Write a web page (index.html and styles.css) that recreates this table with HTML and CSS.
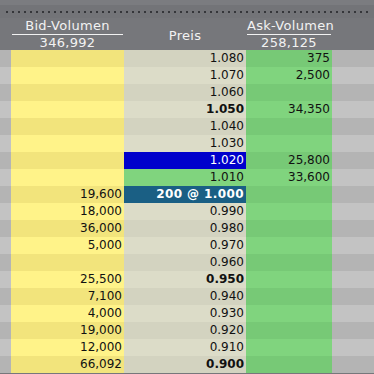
FILE: index.html
```html
<!DOCTYPE html>
<html lang="de">
<head>
  <meta charset="UTF-8">
  <title>Orderbuch</title>
  <link rel="stylesheet" href="styles.css">
</head>
<body>
  <div class="book">
    <div class="grip"><span class="dots"></span></div>
    <div class="head">
      <div class="side"></div>
      <div class="bid total"><span class="lbl">Bid-Volumen</span><span>346,992</span></div>
      <div class="price"><span>Preis</span></div>
      <div class="ask total"><span class="lbl">Ask-Volumen</span><span>258,125</span></div>
      <div class="side"></div>
    </div>
    <table class="rows">
      <tr><td class="side"></td><td class="bid"></td><td class="price">1.080</td><td class="ask">375</td><td class="side"></td></tr>
      <tr><td class="side"></td><td class="bid"></td><td class="price">1.070</td><td class="ask">2,500</td><td class="side"></td></tr>
      <tr><td class="side"></td><td class="bid"></td><td class="price">1.060</td><td class="ask"></td><td class="side"></td></tr>
      <tr><td class="side"></td><td class="bid"></td><td class="price strong">1.050</td><td class="ask">34,350</td><td class="side"></td></tr>
      <tr><td class="side"></td><td class="bid"></td><td class="price">1.040</td><td class="ask"></td><td class="side"></td></tr>
      <tr><td class="side"></td><td class="bid"></td><td class="price">1.030</td><td class="ask"></td><td class="side"></td></tr>
      <tr><td class="side"></td><td class="bid"></td><td class="price best-ask">1.020</td><td class="ask">25,800</td><td class="side"></td></tr>
      <tr><td class="side"></td><td class="bid"></td><td class="price in-ask">1.010</td><td class="ask">33,600</td><td class="side"></td></tr>
      <tr><td class="side"></td><td class="bid">19,600</td><td class="price last">200 @ 1.000</td><td class="ask"></td><td class="side"></td></tr>
      <tr><td class="side"></td><td class="bid">18,000</td><td class="price">0.990</td><td class="ask"></td><td class="side"></td></tr>
      <tr><td class="side"></td><td class="bid">36,000</td><td class="price">0.980</td><td class="ask"></td><td class="side"></td></tr>
      <tr><td class="side"></td><td class="bid">5,000</td><td class="price">0.970</td><td class="ask"></td><td class="side"></td></tr>
      <tr><td class="side"></td><td class="bid"></td><td class="price">0.960</td><td class="ask"></td><td class="side"></td></tr>
      <tr><td class="side"></td><td class="bid">25,500</td><td class="price strong">0.950</td><td class="ask"></td><td class="side"></td></tr>
      <tr><td class="side"></td><td class="bid">7,100</td><td class="price">0.940</td><td class="ask"></td><td class="side"></td></tr>
      <tr><td class="side"></td><td class="bid">4,000</td><td class="price">0.930</td><td class="ask"></td><td class="side"></td></tr>
      <tr><td class="side"></td><td class="bid">19,000</td><td class="price">0.920</td><td class="ask"></td><td class="side"></td></tr>
      <tr><td class="side"></td><td class="bid">12,000</td><td class="price">0.910</td><td class="ask"></td><td class="side"></td></tr>
      <tr><td class="side"></td><td class="bid">66,092</td><td class="price strong">0.900</td><td class="ask"></td><td class="side"></td></tr>
    </table>
  </div>
</body>
</html>
```

FILE: styles.css
```css
body {
  margin: 0;
  background: #76777b;
  font-family: 'DejaVu Sans', Verdana, sans-serif;
  font-size: 12px;
  color: #111;
}
.book {
  width: 374px;
  height: 374px;
  overflow: hidden;
}
.grip {
  height: 18px;
  background: #737478;
  border-top: 5px solid #7b7c80;
  box-sizing: border-box;
  display: flex;
  align-items: center;
  padding: 0 4px;
}
.dots {
  flex: 1;
  height: 2px;
  margin-top: 1px;
  background-image: radial-gradient(circle, #35363a 0.9px, transparent 1.2px);
  background-size: 6px 2px;
}
.head {
  height: 32px;
  display: flex;
  color: #f2f2f2;
  font-size: 13px;
  white-space: nowrap;
}
.head > div {
  display: flex;
  flex-direction: column;
  align-items: center;
}
.head .lbl {
  align-self: stretch;
  margin: 0 1px;
  text-align: center;
  border-bottom: 1px solid #f2f2f2;
  line-height: 16px;
  letter-spacing: 0.3px;
}
.head .total span:last-child {
  line-height: 15px;
  letter-spacing: 0.3px;
}
.head .price {
  padding-top: 10px;
  letter-spacing: 0.3px;
}
.side:first-child { width: 11px; }
.bid { width: 113px; }
.price { width: 122px; }
.ask { width: 86px; }
.side:last-child { width: 42px; }
.rows {
  border-collapse: collapse;
  table-layout: fixed;
  width: 374px;
}
.rows td {
  height: 17px;
  padding: 0 2px 0 0;
  text-align: right;
  white-space: nowrap;
  line-height: 17px;
  box-sizing: border-box;
}
.rows td.side { background: #b4b4b4; }
.rows td.bid { background: #f2e47c; }
.rows td.price { background: #d3d3c0; }
.rows td.ask { background: #77c976; }
.rows tr:nth-child(even) td.side { background: #c3c3c3; }
.rows tr:nth-child(even) td.bid { background: #fff389; }
.rows tr:nth-child(even) td.price { background: #dcdcc8; }
.rows tr:nth-child(even) td.ask { background: #80d47e; }
.rows td.strong { font-weight: bold; }
.rows td.best-ask,
.rows tr:nth-child(odd) td.best-ask {
  background: #0000cc;
  color: #fff;
}
.rows td.in-ask,
.rows tr:nth-child(even) td.in-ask { background: #80d47e; }
.rows td.last,
.rows tr:nth-child(odd) td.last {
  background: #1a5f84;
  color: #fff;
  font-weight: bold;
  letter-spacing: 0.4px;
}
```
